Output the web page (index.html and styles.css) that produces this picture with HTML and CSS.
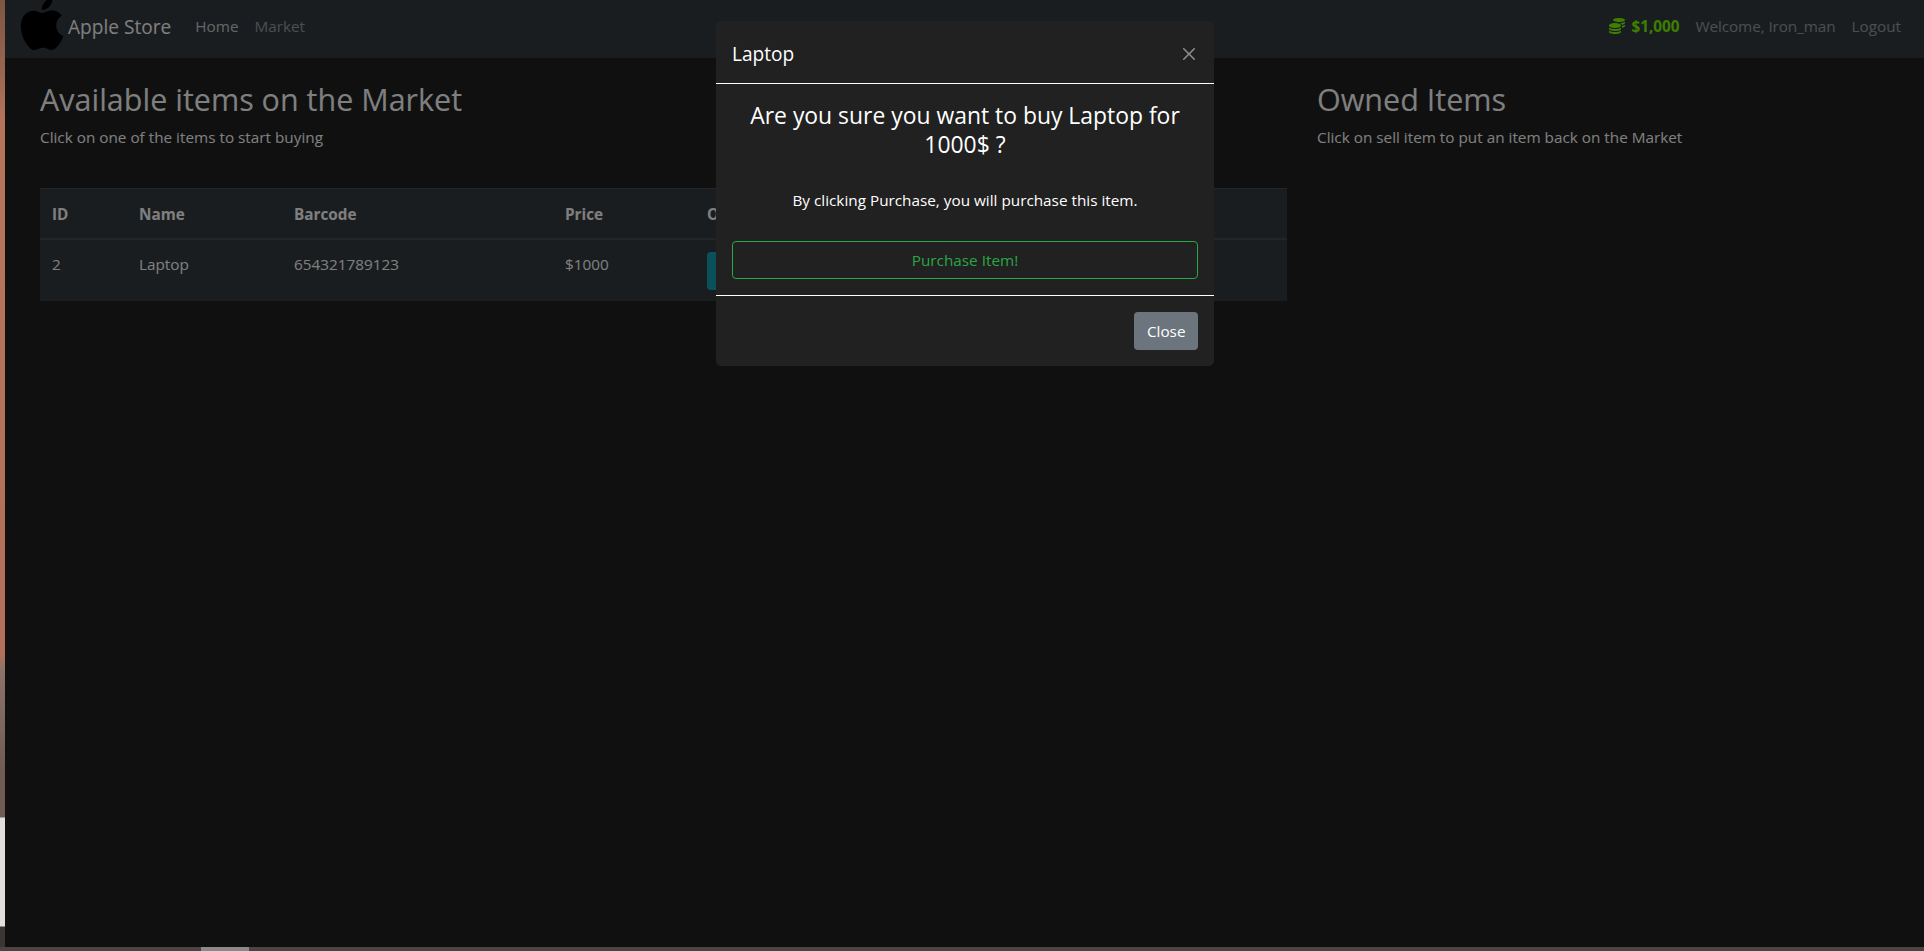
FILE: index.html
```html
<!DOCTYPE html>
<html lang="en">
<head>
  <meta charset="UTF-8">
  <meta name="viewport" content="width=device-width, initial-scale=1.0">
  <title>Apple Store – Market</title>
  <link rel="stylesheet" href="styles.css">
</head>
<body>
  <div class="screen">
    <div class="wallpaper"></div>
    <div class="window">
      <header class="navbar">
        <a class="brand" href="#">
          <svg class="brand-logo" viewBox="0 0 24 24"><path d="M12.152 6.896c-.948 0-2.415-1.078-3.96-1.04-2.04.027-3.91 1.183-4.961 3.014-2.117 3.675-.546 9.103 1.519 12.09 1.013 1.454 2.208 3.09 3.792 3.039 1.52-.065 2.09-.987 3.935-.987 1.831 0 2.35.987 3.96.948 1.637-.026 2.676-1.48 3.676-2.948 1.156-1.688 1.636-3.325 1.662-3.415-.039-.013-3.182-1.221-3.22-4.857-.026-3.04 2.48-4.494 2.597-4.559-1.429-2.09-3.623-2.324-4.39-2.376-2-.156-3.675 1.09-4.61 1.09zM15.53 3.83c.843-1.012 1.4-2.427 1.245-3.83-1.207.052-2.662.805-3.532 1.818-.78.896-1.454 2.338-1.273 3.714 1.338.104 2.715-.688 3.559-1.701"/></svg>
          <span>Apple Store</span>
        </a>
        <nav class="nav-links">
          <a class="active" href="#">Home</a>
          <a href="#">Market</a>
        </nav>
        <div class="nav-right">
          <span class="budget">
            <svg class="coins" viewBox="0 0 512 512"><path d="M0 405.3V448c0 35.3 86 64 192 64s192-28.7 192-64v-42.7C342.7 434.4 267.2 448 192 448S41.3 434.4 0 405.3zM320 128c106 0 192-28.7 192-64S426 0 320 0 128 28.7 128 64s86 64 192 64zM0 300.4V352c0 35.3 86 64 192 64s192-28.7 192-64v-51.6c-41.3 34-116.9 51.6-192 51.6S41.3 334.4 0 300.4zm416 11c57.3-11.1 96-31.7 96-55.4v-42.7c-23.2 16.4-57.3 27.6-96 34.5v63.6zM192 160C86 160 0 195.8 0 240s86 80 192 80 192-35.8 192-80-86-80-192-80zm219.3 56.3c60-10.8 100.7-32 100.7-56.3v-42.7c-35.5 25.1-96.5 38.6-160.7 41.8 29.5 14.3 51.2 33.5 60 57.2z"/></svg>
            $1,000
          </span>
          <a class="welcome" href="#">Welcome, Iron_man</a>
          <a href="#">Logout</a>
        </div>
      </header>

      <main class="content">
        <section class="col-market">
          <h2>Available items on the Market</h2>
          <p>Click on one of the items to start buying</p>
          <table class="items">
            <colgroup>
              <col class="col-id"><col class="col-name"><col class="col-barcode"><col class="col-price"><col>
            </colgroup>
            <thead>
              <tr><th>ID</th><th>Name</th><th>Barcode</th><th>Price</th><th>Options</th></tr>
            </thead>
            <tbody>
              <tr>
                <td>2</td><td>Laptop</td><td>654321789123</td><td>$1000</td>
                <td><button class="btn btn-info">More Info</button></td>
              </tr>
            </tbody>
          </table>
        </section>
        <section class="col-owned">
          <h2>Owned Items</h2>
          <p>Click on sell item to put an item back on the Market</p>
        </section>
      </main>

      <div class="backdrop"></div>

      <div class="modal">
        <div class="modal-header">
          <h5>Laptop</h5>
          <svg class="btn-close" viewBox="0 0 16 16"><path d="M.293.293a1 1 0 011.414 0L8 6.586 14.293.293a1 1 0 111.414 1.414L9.414 8l6.293 6.293a1 1 0 01-1.414 1.414L8 9.414l-6.293 6.293a1 1 0 01-1.414-1.414L6.586 8 .293 1.707a1 1 0 010-1.414z"/></svg>
        </div>
        <div class="modal-body">
          <h4>Are you sure you want to buy Laptop for 1000$ ?</h4>
          <p>By clicking Purchase, you will purchase this item.</p>
          <button class="btn btn-outline-success">Purchase Item!</button>
        </div>
        <div class="modal-footer">
          <button class="btn btn-secondary">Close</button>
        </div>
      </div>
    </div>
  </div>
  <div class="taskbar"><span class="thumb"></span></div>
</body>
</html>
```

FILE: styles.css
```css
* {
  box-sizing: border-box;
}
html, body {
  height: 100%;
  margin: 0;
}
body {
  display: flex;
  flex-direction: column;
  overflow: hidden;
  background: #3a3634;
  font-family: "Open Sans", "Liberation Sans", sans-serif;
  font-size: 15.3px;
  line-height: 24px;
  color: #fff;
}
a {
  color: inherit;
  text-decoration: none;
}
.screen {
  flex: 1;
  display: flex;
  min-height: 0;
}
.wallpaper {
  width: 5px;
  background: linear-gradient(#7d5544 0, #9a6650 73px, #b4745a 120px, #b4705a 655px, #8d7368 670px, #6f5c55 770px, #6f5c55 817px, #e3dfda 818px, #e3dfda 926px, #3a3634 927px);
}
.window {
  position: relative;
  flex: 1;
  min-width: 0;
  overflow: hidden;
  background: #212121;
}
.taskbar {
  height: 4px;
  padding-left: 201px;
  background: #4a4542;
}
.thumb {
  display: block;
  width: 48px;
  height: 4px;
  background: #8a8a8a;
}

/* navbar */
.navbar {
  display: flex;
  align-items: center;
  height: 58px;
  padding: 0 23px 5px 0;
  background: #343a40;
  color: rgba(255, 255, 255, .5);
}
.brand {
  display: flex;
  align-items: center;
  font-size: 19.1px;
  color: #fff;
}
.brand-logo {
  width: 52px;
  height: 52px;
  margin: -5px 0 0 11px;
}
.nav-links {
  display: flex;
  gap: 16px;
  margin: 0 0 2px 24px;
}
.nav-links .active {
  color: rgba(255, 255, 255, .75);
}
.nav-right {
  display: flex;
  align-items: center;
  gap: 16px;
  margin: 0 0 2px auto;
}
.welcome {
  letter-spacing: -.1px;
}
.budget {
  display: flex;
  align-items: center;
  gap: 6px;
  font-weight: 700;
  color: #7cfc00;
}
.coins {
  width: 16px;
  height: 16px;
  fill: #7cfc00;
}

/* page */
.content {
  display: flex;
  padding-left: 20px;
  width: 1916px;
}
.col-market {
  width: 1277px;
  padding: 0 15px;
}
.col-owned {
  flex: 1;
  padding: 0 15px;
}
h2 {
  margin: 22px 0 7px;
  font-size: 30.5px;
  font-weight: 400;
  line-height: 38px;
  color: #fff;
}
.content p {
  margin: 0 0 39px;
}

.items {
  width: 100%;
  table-layout: fixed;
  border-collapse: collapse;
  background: #343a40;
}
.col-id { width: 87px; }
.col-name { width: 155px; }
.col-barcode { width: 271px; }
.col-price { width: 142px; }
.items th,
.items td {
  padding: 12px 12px 11px;
  text-align: left;
  vertical-align: top;
}
.items th {
  height: 50px;
  padding-top: 13px;
  border-bottom: 2px solid #454d55;
  border-top: 1px solid #454d55;
  font-weight: 700;
}
.btn {
  display: block;
  height: 38px;
  padding: 0 12px;
  border: 1px solid transparent;
  border-radius: 4px;
  font: inherit;
  color: #fff;
}
.btn-info {
  background: #17a2b8;
}

/* modal */
.backdrop {
  position: absolute;
  inset: 0;
  background: rgba(0, 0, 0, .5);
}
.modal {
  position: absolute;
  top: 21px;
  left: 711px;
  width: 498px;
  border-radius: 5px;
  background: #212121;
}
.modal-header {
  display: flex;
  align-items: center;
  justify-content: space-between;
  height: 63px;
  padding: 3px 16px 0;
  border-bottom: 1px solid #fff;
}
h5 {
  margin: 0;
  font-size: 19.1px;
  font-weight: 400;
  line-height: 30px;
}
.btn-close {
  width: 12px;
  height: 12px;
  margin-right: 3px;
  opacity: .5;
  fill: #fff;
}
.modal-body {
  padding: 17px 16px 16px;
  text-align: center;
}
h4 {
  margin: 0 0 8px;
  font-size: 22.9px;
  font-weight: 400;
  line-height: 29px;
}
.modal-body p {
  margin: 29px 0 29px;
}
.btn-outline-success {
  width: 100%;
  border-color: #28a745;
  background: transparent;
  color: #28a745;
}
.modal-footer {
  display: flex;
  justify-content: flex-end;
  padding: 16px;
  border-top: 1px solid #fff;
}
.btn-secondary {
  padding: 0 11.5px;
  background: #6c757d;
}
```
